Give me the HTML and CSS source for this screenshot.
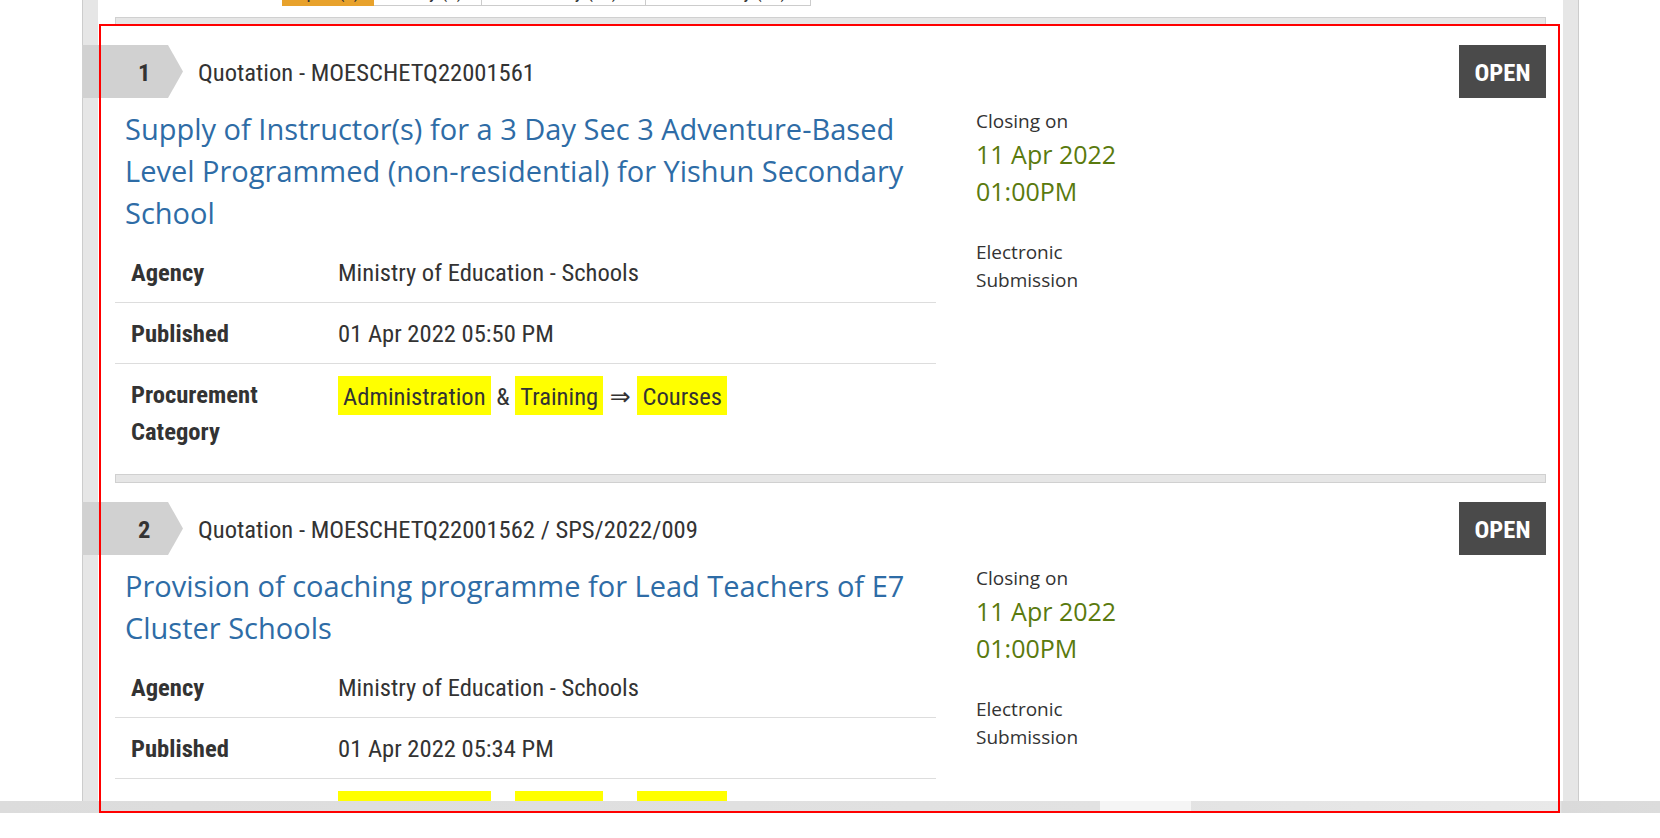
FILE: index.html
```html
<!DOCTYPE html>
<html lang="en">
<head>
<meta charset="utf-8">
<title>Opportunities</title>
<link rel="stylesheet" href="styles.css">
</head>
<body>
<div class="viewport">
  <div class="frame">
    <div class="panel">
      <div class="tabs">
        <span class="tab tab-active">Open (2)</span>
        <span class="tab">Today (1)</span>
        <span class="tab">Yesterday (12)</span>
        <span class="tab">This Friday (16)</span>
      </div>
      <div class="sep"></div>

      <article class="item">
        <header class="item-head">
          <div class="num">1</div>
          <div class="ref">Quotation - MOESCHETQ22001561</div>
          <div class="status">OPEN</div>
        </header>
        <div class="item-body">
          <div class="main">
            <a class="title" href="#">Supply of Instructor(s) for a 3 Day Sec 3 Adventure-Based Level Programmed (non-residential) for Yishun Secondary School</a>
            <table class="meta">
              <tr><td class="k">Agency</td><td class="v">Ministry of Education - Schools</td></tr>
              <tr><td class="k">Published</td><td class="v">01 Apr 2022 05:50 PM</td></tr>
              <tr><td class="k">Procurement Category</td><td class="v"><span class="hl">Administration</span> &amp; <span class="hl">Training</span> <span class="arrow">&rArr;</span> <span class="hl">Courses</span></td></tr>
            </table>
          </div>
          <div class="closing">
            <div class="closing-label">Closing on</div>
            <div class="closing-date"><span>11 Apr 2022</span><span>01:00PM</span></div>
            <div class="submission">Electronic Submission</div>
          </div>
        </div>
      </article>
      <div class="sep"></div>

      <article class="item">
        <header class="item-head">
          <div class="num">2</div>
          <div class="ref">Quotation - MOESCHETQ22001562 / SPS/2022/009</div>
          <div class="status">OPEN</div>
        </header>
        <div class="item-body">
          <div class="main">
            <a class="title" href="#">Provision of coaching programme for Lead Teachers of E7 Cluster Schools</a>
            <table class="meta">
              <tr><td class="k">Agency</td><td class="v">Ministry of Education - Schools</td></tr>
              <tr><td class="k">Published</td><td class="v">01 Apr 2022 05:34 PM</td></tr>
              <tr><td class="k">Procurement Category</td><td class="v"><span class="hl">Administration</span> &amp; <span class="hl">Training</span> <span class="arrow">&rArr;</span> <span class="hl">Courses</span></td></tr>
            </table>
          </div>
          <div class="closing">
            <div class="closing-label">Closing on</div>
            <div class="closing-date"><span>11 Apr 2022</span><span>01:00PM</span></div>
            <div class="submission">Electronic Submission</div>
          </div>
        </div>
      </article>
    </div>
  </div>
</div>
<div class="hscroll"><div class="hscroll-thumb"></div></div>
<div class="focus-box"></div>
</body>
</html>
```

FILE: styles.css
```css
* { box-sizing: border-box; }

html, body {
  margin: 0;
  padding: 0;
  background: #fff;
}

body {
  width: 1660px;
  height: 838px;
  overflow: hidden;
  position: relative;
  color: #333;
  font-family: "Roboto Condensed", "Liberation Sans Narrow", "DejaVu Sans Condensed", "Liberation Sans", sans-serif;
  font-stretch: condensed;
}

.viewport {
  height: 801px;
  overflow: hidden;
}

.frame {
  margin-left: 82px;
  width: 1497px;
  height: 100%;
  background: #e6e6e6;
  border-left: 1px solid #cccccc;
  border-right: 1px solid #cccccc;
  padding: 0 15px;
}

.panel {
  background: #fff;
  height: 100%;
  padding: 0 17px;
}

/* tabs (cut off at top) */
.tabs {
  display: flex;
  align-items: flex-end;
  height: 6px;
  margin-left: 167px;
  overflow: hidden;
}

.tab {
  flex: none;
  height: 40px;
  padding: 0 0 4px;
  font-size: 19px;
  line-height: 19px;
  display: flex;
  align-items: flex-end;
  justify-content: center;
  border: 1px solid #cccccc;
  border-left: none;
  background: #fff;
  color: #333;
}
.tab:nth-child(1) { width: 92px; }
.tab:nth-child(2) { width: 108px; }
.tab:nth-child(3) { width: 164px; }
.tab:nth-child(4) { width: 165px; }

.tab-active {
  background: #e8a22c;
  border-color: #e8a22c;
}

.sep {
  height: 9px;
  margin-top: 11px;
  background: #e6e6e6;
  border: 1px solid #d0d0d0;
}

.item + .sep { margin-top: 0; }

.item {
  padding: 19px 0 13px;
}

.item-head {
  display: flex;
  align-items: center;
  height: 53px;
}

.num {
  flex: none;
  width: 101px;
  height: 53px;
  margin-left: -33px;
  padding-left: 56px;
  background: #d1d1d1;
  clip-path: polygon(0 0, 86px 0, 101px 50%, 86px 100%, 0 100%);
  font-size: 24.6px;
  font-weight: 700;
  line-height: 55px;
  color: #333;
}

.ref {
  flex: 1;
  margin-left: 15px;
  padding-top: 1px;
  font-size: 24.6px;
  color: #333;
}

.status {
  flex: none;
  width: 87px;
  height: 53px;
  background: #4a4a4a;
  color: #fff;
  font-size: 24.6px;
  font-weight: 700;
  line-height: 55px;
  text-align: center;
}

.item-body {
  display: flex;
  margin-top: 10px;
}

.main {
  flex: none;
  width: 821px;
}

.title {
  display: block;
  padding-left: 10px;
  font-family: "Open Sans", "Noto Sans", sans-serif;
  font-stretch: normal;
  font-size: 29px;
  line-height: 42px;
  color: #2e6ca6;
  text-decoration: none;
}

.meta {
  width: 100%;
  margin-top: 8px;
  border-collapse: collapse;
}

.meta tr { border-bottom: 1px solid #dddddd; }
.meta tr:last-child { border-bottom: none; }

.meta td {
  padding: 12px 0 11px;
  font-size: 24.6px;
  line-height: 37px;
  vertical-align: top;
  color: #333;
}

.meta .k {
  width: 223px;
  padding-left: 16px;
  font-weight: 700;
}

.hl {
  display: inline-block;
  background: #ffff00;
  padding: 2px 5px 0;
}

.arrow {
  margin: 0 1px;
  font-family: "DejaVu Sans", sans-serif;
  font-stretch: normal;
  font-size: 25px;
}

.closing {
  flex: none;
  width: 150px;
  margin-left: 40px;
  margin-top: -1px;
  font-family: "Open Sans", "Noto Sans", sans-serif;
  font-stretch: normal;
  color: #333;
}

.closing-label {
  font-size: 19px;
  line-height: 28px;
}

.closing-date {
  margin-top: 1px;
  font-size: 25px;
  line-height: 37px;
  color: #5a7a0e;
}
.closing-date span { display: block; }

.submission {
  margin-top: 28px;
  font-size: 19px;
  line-height: 28px;
}

/* horizontal scrollbar strip */
.hscroll {
  height: 12px;
  background: linear-gradient(to right, #dcdcdc 0, #e2e2e2 1100px, #e9e9e9 1560px, #dadada 1562px, #dcdcdc 100%);
  position: relative;
}

.hscroll-thumb {
  position: absolute;
  left: 1100px;
  top: 0;
  width: 91px;
  height: 12px;
  background: #f5f5f5;
}

/* red annotation outline drawn over the page */
.focus-box {
  position: absolute;
  left: 99px;
  top: 24px;
  width: 1461px;
  height: 789px;
  border: 2px solid #ff0000;
  pointer-events: none;
}
```
